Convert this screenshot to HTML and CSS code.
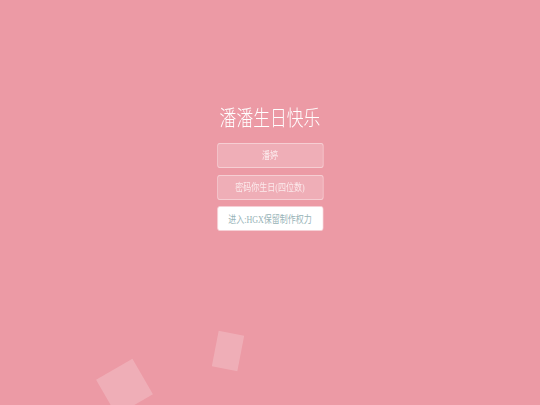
FILE: index.html
```html
<!DOCTYPE html>
<html lang="zh">
<head>
<meta charset="utf-8">
<title>潘潘生日快乐</title>
<link rel="stylesheet" href="styles.css">
</head>
<body>
<div class="page">
  <form class="login">
    <h1 class="title">潘潘生日快乐</h1>
    <input class="field" type="text" placeholder="潘婷">
    <input class="field" type="password" placeholder="密码你生日(四位数)">
    <button class="enter" type="button">进入:HGX保留制作权力</button>
  </form>
  <ul class="bubbles">
    <li class="bubble bubble-a"></li>
    <li class="bubble bubble-b"></li>
  </ul>
</div>
</body>
</html>
```

FILE: styles.css
```css
* { box-sizing: border-box; }

html, body {
  margin: 0;
  padding: 0;
}

body {
  background: #ec9aa5;
  font-family: "Liberation Serif", "Noto Sans CJK SC", serif;
}

.page {
  position: relative;
  width: 540px;
  height: 405px;
  overflow: hidden;
}

.login {
  display: flex;
  flex-direction: column;
  align-items: center;
  padding-top: 104px;
  margin: 0;
  transform: scaleX(0.8);
}

.title {
  margin: 0 0 15px;
  font-family: "Noto Sans CJK SC", sans-serif;
  font-weight: 300;
  font-size: 21px;
  line-height: 24px;
  color: #fff;
  letter-spacing: 0;
}

.field {
  display: block;
  width: 133px;
  height: 25px;
  margin: 0 0 7px;
  padding: 0 6px;
  border: 1px solid rgba(255, 255, 255, 0.4);
  border-radius: 3px;
  background: rgba(255, 255, 255, 0.2);
  color: #fff;
  font-family: "Liberation Serif", "Noto Sans CJK SC", serif;
  font-size: 10px;
  text-align: center;
  outline: none;
}

.field::placeholder {
  color: rgba(255, 255, 255, 0.75);
}

.field + .field { margin-bottom: 6px; }

.enter {
  display: block;
  width: 133px;
  height: 25px;
  padding: 0;
  border: 1px solid #f6cfd5;
  border-radius: 3px;
  background: #fff;
  color: #97b3b7;
  font-family: "Liberation Serif", "Noto Sans CJK SC", serif;
  font-size: 10px;
}

.bubbles {
  list-style: none;
  margin: 0;
  padding: 0;
}

.bubble {
  position: absolute;
  background: rgba(255, 255, 255, 0.2);
}

.bubble-a {
  left: 215px;
  top: 333px;
  width: 26px;
  height: 36px;
  transform: rotate(11deg);
}

.bubble-b {
  left: 104px;
  top: 366px;
  width: 41px;
  height: 42px;
  transform: rotate(60deg);
}
```
